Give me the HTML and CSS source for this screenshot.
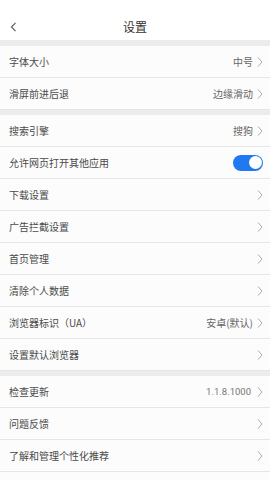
FILE: index.html
```html
<!DOCTYPE html>
<html lang="zh-CN">
<head>
    <meta charset="UTF-8">
    <meta name="viewport" content="width=device-width, initial-scale=1.0">
    <title>设置</title>
    <link rel="stylesheet" href="styles.css">
</head>
<body>
    <header class="topbar">
        <span class="back">
            <svg width="7" height="10" viewBox="0 0 7 10"><polyline points="5.5,0.8 1.5,5 5.5,9.2" fill="none" stroke="#555" stroke-width="1.1"/></svg>
        </span>
        <h1>设置</h1>
    </header>

    <section class="group">
        <div class="row"><span class="label">字体大小</span><span class="value">中号</span><svg class="chev" viewBox="0 0 6 10"><polyline points="1,0.5 5,5 1,9.5"/></svg></div>
        <div class="row"><span class="label">滑屏前进后退</span><span class="value">边缘滑动</span><svg class="chev" viewBox="0 0 6 10"><polyline points="1,0.5 5,5 1,9.5"/></svg></div>
    </section>

    <section class="group">
        <div class="row"><span class="label">搜索引擎</span><span class="value">搜狗</span><svg class="chev" viewBox="0 0 6 10"><polyline points="1,0.5 5,5 1,9.5"/></svg></div>
        <div class="row"><span class="label">允许网页打开其他应用</span><span class="toggle on"><span class="knob"></span></span></div>
        <div class="row"><span class="label">下载设置</span><svg class="chev" viewBox="0 0 6 10"><polyline points="1,0.5 5,5 1,9.5"/></svg></div>
        <div class="row"><span class="label">广告拦截设置</span><svg class="chev" viewBox="0 0 6 10"><polyline points="1,0.5 5,5 1,9.5"/></svg></div>
        <div class="row"><span class="label">首页管理</span><svg class="chev" viewBox="0 0 6 10"><polyline points="1,0.5 5,5 1,9.5"/></svg></div>
        <div class="row"><span class="label">清除个人数据</span><svg class="chev" viewBox="0 0 6 10"><polyline points="1,0.5 5,5 1,9.5"/></svg></div>
        <div class="row"><span class="label">浏览器标识（UA）</span><span class="value">安卓(默认)</span><svg class="chev" viewBox="0 0 6 10"><polyline points="1,0.5 5,5 1,9.5"/></svg></div>
        <div class="row"><span class="label">设置默认浏览器</span><svg class="chev" viewBox="0 0 6 10"><polyline points="1,0.5 5,5 1,9.5"/></svg></div>
    </section>

    <section class="group last">
        <div class="row"><span class="label">检查更新</span><span class="value num">1.1.8.1000</span><svg class="chev" viewBox="0 0 6 10"><polyline points="1,0.5 5,5 1,9.5"/></svg></div>
        <div class="row"><span class="label">问题反馈</span><svg class="chev" viewBox="0 0 6 10"><polyline points="1,0.5 5,5 1,9.5"/></svg></div>
        <div class="row"><span class="label">了解和管理个性化推荐</span><svg class="chev" viewBox="0 0 6 10"><polyline points="1,0.5 5,5 1,9.5"/></svg></div>
    </section>
</body>
</html>
```

FILE: styles.css
```css
body, html {
    margin: 0;
    padding: 0;
    background-color: #ececec;
    font-family: "Noto Sans CJK SC", "Noto Sans", sans-serif;
    color: #444;
    overflow: hidden;
}

.topbar {
    height: 40px;
    background-color: #fff;
    display: flex;
    align-items: center;
    justify-content: center;
    position: relative;
    box-sizing: border-box;
    padding-top: 12px;
}

.topbar h1 {
    margin: 0;
    font-size: 12px;
    font-weight: normal;
    color: #333;
}

.back {
    position: absolute;
    left: 10px;
    top: 22px;
    display: flex;
}

.group {
    margin-top: 6px;
    background-color: #fcfcfc;
}

.group + .group {
    margin-top: 5px;
}

.group.last {
    padding-bottom: 20px;
}

.row {
    height: 31px;
    display: flex;
    align-items: center;
    padding: 0 7px 0 9px;
    border-bottom: 1px solid #e6e6e6;
}

.label {
    flex: 1;
    font-size: 10px;
    color: #4a4a4a;
}

.value {
    font-size: 10px;
    color: #666;
    margin-right: 4px;
}

.value.num {
    font-family: Roboto, "Noto Sans", sans-serif;
    font-size: 9.5px;
    color: #777;
    margin-right: 6px;
}

.chev {
    width: 6px;
    height: 10px;
    fill: none;
    stroke: #a0a0a0;
    stroke-width: 0.9;
}

.toggle {
    width: 30px;
    height: 16px;
    border-radius: 8px;
    background-color: #2079f0;
    display: flex;
    align-items: center;
    justify-content: flex-end;
    padding: 0 1.5px;
    box-sizing: border-box;
    margin-right: 0;
}

.knob {
    width: 13px;
    height: 13px;
    border-radius: 50%;
    background-color: #fff;
}
```
